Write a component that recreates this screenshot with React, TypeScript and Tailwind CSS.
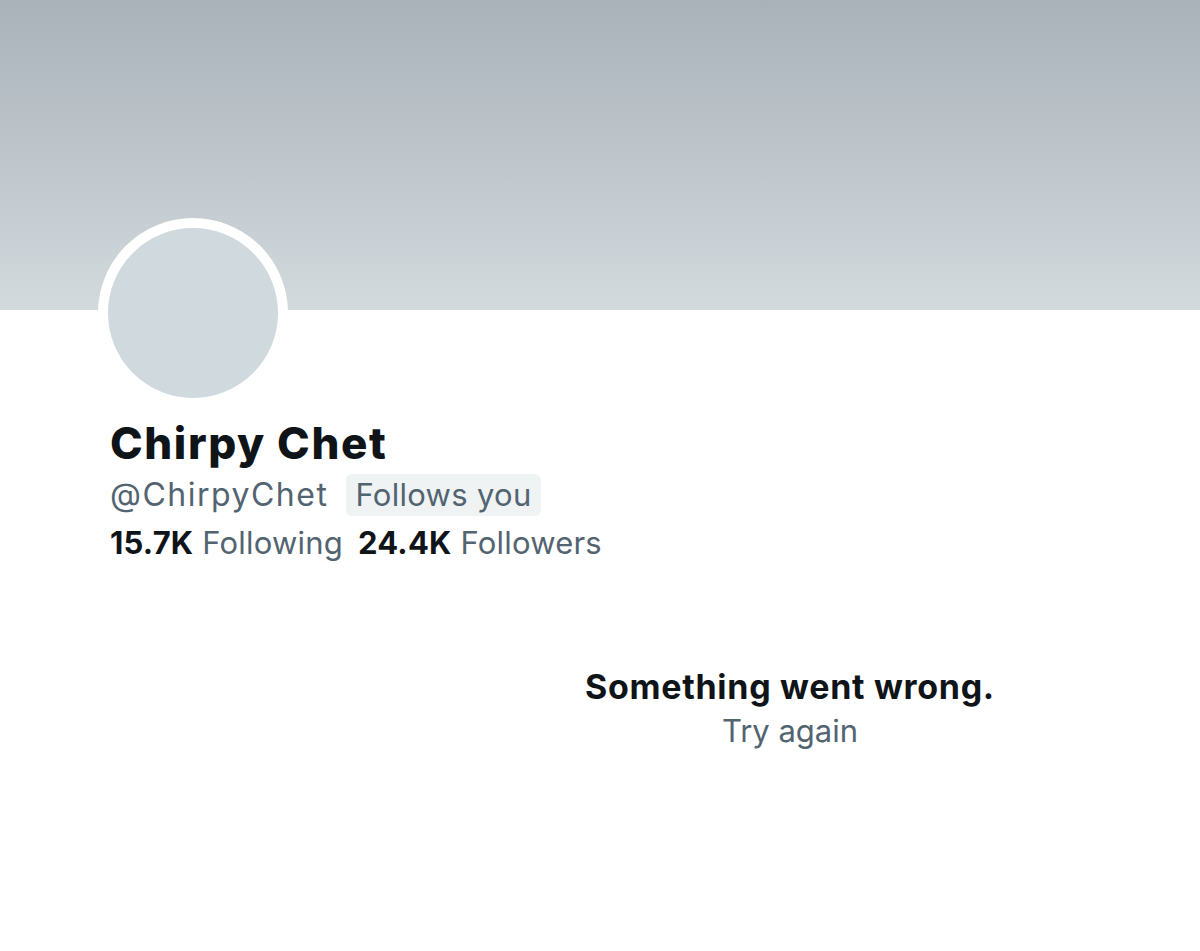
import React from 'react';

const Stat: React.FC<{ value: string; label: string }> = ({ value, label }) => (
  <span className="whitespace-nowrap">
    <span className="font-bold text-[#0f1419]">{value}</span>
    <span className="text-[#536471]"> {label}</span>
  </span>
);

const App: React.FC = () => {
  return (
    <div
      className="min-h-[951px] w-full bg-white flex flex-col"
      style={{ fontFamily: 'Inter, "Noto Sans", sans-serif' }}
    >
      {/* banner */}
      <div className="h-[310px] w-full bg-gradient-to-b from-[#a9b2b9] to-[#d3dade]" />

      {/* profile info */}
      <div className="px-[98px] flex flex-col">
        <div className="-mt-[92px] w-[190px] h-[190px] rounded-full border-[10px] border-white bg-[#cfd9de]" />

        <div className="pl-[12px] mt-[10px] flex flex-col">
          <h1 className="text-[44px] leading-[50px] font-extrabold text-[#0f1419] tracking-[1.6px]">
            Chirpy Chet
          </h1>
          <div className="mt-[6px] flex items-center gap-[18px] h-[42px]">
            <span className="text-[32px] leading-[36px] text-[#536471] tracking-[1.5px]">@ChirpyChet</span>
            <span className="h-[42px] px-[9px] flex items-center rounded-[6px] bg-[#eff3f4] text-[31px] text-[#536471] tracking-[0.3px]">
              Follows you
            </span>
          </div>
          <div className="mt-[8px] flex items-center gap-[15px] text-[31px] leading-[38px] tracking-[0.2px]">
            <Stat value="15.7K" label="Following" />
            <Stat value="24.4K" label="Followers" />
          </div>
        </div>
      </div>

      {/* error state */}
      <div className="mt-[104px] pl-[380px] flex flex-col items-center">
        <p className="text-[34px] leading-[42px] font-bold text-[#0f1419] tracking-[0.7px]">Something went wrong.</p>
        <p className="mt-[4px] text-[31px] leading-[38px] text-[#536471]">Try again</p>
      </div>
    </div>
  );
};

export default App;
